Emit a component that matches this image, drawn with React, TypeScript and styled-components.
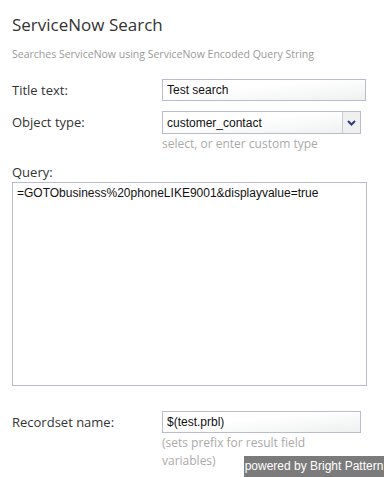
import React from 'react';
import styled, { createGlobalStyle } from 'styled-components';

const GlobalStyle = createGlobalStyle`
  html, body {
    margin: 0;
    padding: 0;
    background: #fff;
  }
  body {
    font-family: 'Open Sans', 'Noto Sans', sans-serif;
    color: #333;
  }
`;

const Page = styled.div`
  position: relative;
  width: 384px;
  height: 477px;
  box-sizing: border-box;
  padding: 12px 18px 0 12px;
  overflow: hidden;
`;

const Title = styled.h1`
  margin: 0;
  font-size: 17px;
  font-weight: 400;
  line-height: 26px;
  color: #333;
`;

const Subtitle = styled.div`
  margin-top: 8px;
  font-size: 10.5px;
  line-height: 16px;
  color: #999;
`;

const Form = styled.div`
  margin-top: 17px;
  display: flex;
  flex-direction: column;
`;

const Row = styled.div<{ gap?: number }>`
  display: grid;
  grid-template-columns: 150px 1fr;
  align-items: start;
  margin-top: ${({ gap }) => gap ?? 0}px;
`;

const Label = styled.label`
  font-size: 13px;
  line-height: 22px;
  color: #333;
`;

const FieldCol = styled.div<{ narrow?: boolean }>`
  display: flex;
  flex-direction: column;
  padding-right: ${({ narrow }) => (narrow ? 5 : 0)}px;
`;

const TextInput = styled.input`
  box-sizing: border-box;
  width: 100%;
  height: 22px;
  padding: 0 4px;
  border: 1px solid #b9bccb;
  border-radius: 0;
  background: linear-gradient(to bottom right, #ffffff 40%, #eef0f0);
  font-family: 'Liberation Sans', Arial, sans-serif;
  font-size: 12px;
  color: #111;
  outline: none;
`;

const Combo = styled.div`
  display: flex;
  height: 23px;
  box-sizing: border-box;
  border: 1px solid #b9bccb;
  background: linear-gradient(to bottom right, #ffffff 40%, #eef0f0);
`;

const ComboInput = styled.input`
  flex: 1;
  min-width: 0;
  border: none;
  background: transparent;
  padding: 0 4px;
  font-family: 'Liberation Sans', Arial, sans-serif;
  font-size: 12px;
  color: #111;
  outline: none;
`;

const ComboButton = styled.div`
  width: 17px;
  border-left: 1px solid #c8cad4;
  background: #f0f0f0;
  display: flex;
  align-items: center;
  justify-content: center;
`;

const Hint = styled.div`
  font-size: 12px;
  line-height: 18px;
  color: #aaa;
  margin-top: 1px;
`;

const QueryLabel = styled(Label)`
  display: block;
  margin-top: 9px;
  line-height: 20px;
`;

const QueryArea = styled.textarea`
  box-sizing: border-box;
  width: 355px;
  height: 204px;
  margin: 0;
  padding: 3px 4px;
  border: 1px solid #b9bccb;
  border-radius: 0;
  resize: none;
  background: #fff;
  font-family: 'Liberation Sans', Arial, sans-serif;
  font-size: 12px;
  line-height: 15px;
  color: #111;
  outline: none;
`;

const Badge = styled.div`
  position: absolute;
  right: 0;
  bottom: 0;
  width: 140px;
  height: 21px;
  background: #7b7b7b;
  color: #fff;
  font-family: 'Liberation Sans', Arial, sans-serif;
  font-size: 12px;
  line-height: 21px;
  text-align: center;
`;

const Chevron = () => (
  <svg width="9" height="6" viewBox="0 0 9 6">
    <path d="M1 1 L4.5 4.5 L8 1" fill="none" stroke="#2c3f73" strokeWidth="2" />
  </svg>
);

export default function App() {
  return (
    <>
      <GlobalStyle />
      <Page>
        <Title>ServiceNow Search</Title>
        <Subtitle>Searches ServiceNow using ServiceNow Encoded Query String</Subtitle>
        <Form>
          <Row>
            <Label>Title text:</Label>
            <FieldCol>
              <TextInput defaultValue="Test search" />
            </FieldCol>
          </Row>
          <Row gap={10}>
            <Label>Object type:</Label>
            <FieldCol narrow>
              <Combo>
                <ComboInput defaultValue="customer_contact" />
                <ComboButton>
                  <Chevron />
                </ComboButton>
              </Combo>
              <Hint>select, or enter custom type</Hint>
            </FieldCol>
          </Row>
          <QueryLabel>Query:</QueryLabel>
          <QueryArea defaultValue="=GOTObusiness%20phoneLIKE9001&displayvalue=true" />
          <Row gap={25}>
            <Label>Recordset name:</Label>
            <FieldCol narrow>
              <TextInput defaultValue="$(test.prbl)" />
              <Hint>
                (sets prefix for result field
                <br />
                variables)
              </Hint>
            </FieldCol>
          </Row>
        </Form>
        <Badge>powered by Bright Pattern</Badge>
      </Page>
    </>
  );
}
